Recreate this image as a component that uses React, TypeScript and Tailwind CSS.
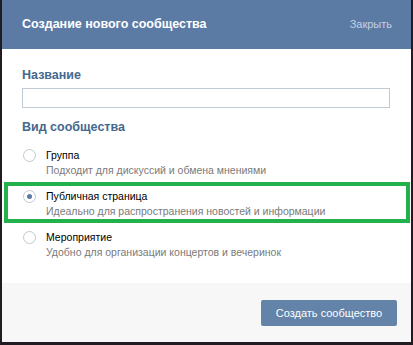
import React from "react";

type Option = {
    id: string;
    title: string;
    hint: string;
};

const options: Option[] = [
    { id: "group", title: "Группа", hint: "Подходит для дискуссий и обмена мнениями" },
    { id: "public", title: "Публичная страница", hint: "Идеально для распространения новостей и информации" },
    { id: "event", title: "Мероприятие", hint: "Удобно для организации концертов и вечеринок" },
];

function Radio({ checked }: { checked: boolean }) {
    return (
        <span className="mt-[1px] flex h-[13px] w-[13px] shrink-0 items-center justify-center rounded-full border border-[#c1c9d2] bg-white">
            {checked && <span className="h-[5px] w-[5px] rounded-full bg-[#5b7ba5]" />}
        </span>
    );
}

export default function App() {
    const selected = "public";

    return (
        <div
            className="h-[345px] w-[413px] overflow-hidden bg-[#221c22] pl-[2px] pr-[2px]"
            style={{ fontFamily: '"Liberation Sans", Arial, sans-serif' }}
        >
            <div className="flex h-[342px] w-[409px] flex-col bg-white">
                <div className="flex h-[49px] shrink-0 items-center justify-between bg-[#5b7ba5] pl-[20px] pr-[19px]">
                    <span className="text-[12.5px] font-bold text-white">Создание нового сообщества</span>
                    <span className="text-[11px] text-[#c4d1e2]">Закрыть</span>
                </div>

                <div className="flex h-[234px] shrink-0 flex-col pt-[17px]">
                    <div className="px-[20px]">
                        <h2 className="text-[12.5px] font-bold leading-[18px] text-[#45688e]">Название</h2>
                        <input className="mt-[4px] block h-[20px] w-[368px] border border-[#c0cad5] bg-white outline-none" />
                        <h2 className="mt-[10px] text-[12.5px] font-bold leading-[18px] text-[#45688e]">Вид сообщества</h2>
                    </div>

                    <div className="mt-[5px] flex flex-col">
                        {options.map((o) => (
                            <div
                                key={o.id}
                                className={
                                    o.id === selected
                                        ? "ml-[2px] mr-[1px] flex gap-[10px] border-[4px] border-[#22b14c] pt-[3px] pl-[15px]"
                                        : "ml-[2px] mr-[1px] flex gap-[10px] border-[4px] border-transparent pt-[3px] pl-[15px]"
                                }
                            >
                                <Radio checked={o.id === selected} />
                                <div className="flex flex-col">
                                    <span className="text-[10.5px] leading-[15px] text-black">{o.title}</span>
                                    <span className="text-[10.5px] leading-[15px] text-[#7a7a7a]">{o.hint}</span>
                                </div>
                            </div>
                        ))}
                    </div>
                </div>

                <div className="flex h-[59px] shrink-0 items-start justify-end bg-[#f7f7f7] pt-[17px] pr-[14px]">
                    <button className="h-[26px] w-[136px] rounded-[2px] bg-[#6383a8] text-[11px] text-white">
                        Создать сообщество
                    </button>
                </div>
            </div>
        </div>
    );
}
